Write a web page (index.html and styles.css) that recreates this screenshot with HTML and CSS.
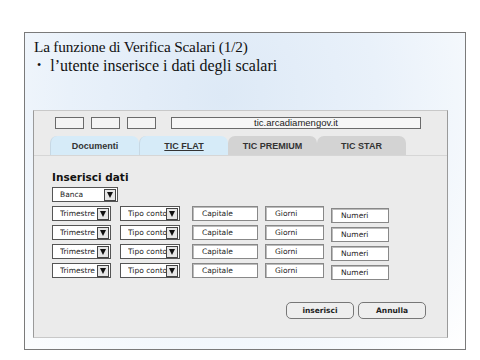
FILE: index.html
```html
<!DOCTYPE html>
<html lang="it">
<head>
  <meta charset="UTF-8">
  <title>La funzione di Verifica Scalari</title>
  <link rel="stylesheet" href="styles.css">
</head>
<body>
  <div class="slide">
    <h1 class="title">La funzione di Verifica Scalari (1/2)</h1>
    <ul class="bullets">
      <li>l’utente inserisce i dati degli scalari</li>
    </ul>

    <div class="mockup">
      <div class="browser-bar">
        <span class="nav-box"></span>
        <span class="nav-box"></span>
        <span class="nav-box"></span>
        <span class="url-box">tic.arcadiamengov.it</span>
      </div>

      <div class="tabs">
        <span class="tab active">Documenti</span>
        <span class="tab active link">TIC FLAT</span>
        <span class="tab">TIC PREMIUM</span>
        <span class="tab">TIC STAR</span>
      </div>

      <div class="content">
        <h2 class="form-title">Inserisci dati</h2>
        <div class="select wide"><span>Banca</span><i class="arrow"></i></div>

        <div class="rows" id="rows"></div>

        <div class="actions">
          <button class="btn">inserisci</button>
          <button class="btn">Annulla</button>
        </div>
      </div>
    </div>
  </div>

  <script>
    const rows = document.getElementById("rows");
    for (let i = 0; i < 4; i++) {
      const row = document.createElement("div");
      row.className = "row";
      row.innerHTML =
        '<div class="select trim"><span>Trimestre</span><i class="arrow"></i></div>' +
        '<div class="select tipo"><span>Tipo conto</span><i class="arrow"></i></div>' +
        '<div class="field cap">Capitale</div>' +
        '<div class="field gio">Giorni</div>' +
        '<div class="field num">Numeri</div>';
      rows.appendChild(row);
    }
  </script>
</body>
</html>
```

FILE: styles.css
```css
/* Pagina */
body {
  margin: 0;
  background: #ffffff;
  width: 480px;
  height: 360px;
  overflow: hidden;
}

.slide {
  box-sizing: border-box;
  margin: 32px 0 0 24px;
  width: 442px;
  height: 318px;
  border: 1px solid #7a7a7a;
  background: radial-gradient(ellipse at 45% 20%, #dde9f6 0%, #e9f1fa 45%, #f7fafd 80%, #ffffff 100%);
  padding: 4px 0 0 8px;
}

.title {
  margin: 0;
  padding-left: 1px;
  font-family: "Liberation Serif", serif;
  font-weight: normal;
  font-size: 15.3px;
  line-height: 19px;
  color: #111;
  letter-spacing: -0.2px;
}

.bullets {
  margin: 0;
  padding: 0;
  list-style: none;
  font-family: "Liberation Serif", serif;
  font-size: 16px;
  line-height: 19px;
  color: #111;
}

.bullets li {
  display: flex;
  gap: 9px;
}

.bullets li::before {
  content: "•";
  font-size: 12px;
  padding-left: 4px;
}

/* Mockup finestra */
.mockup {
  box-sizing: border-box;
  margin-top: 35px;
  width: 415px;
  height: 228px;
  background: #ebebeb;
  border: 1px solid #c8c8c8;
  border-left-color: #9a9a9a;
  border-right-color: #9a9a9a;
  font-family: "Liberation Sans", sans-serif;
}

.browser-bar {
  display: flex;
  gap: 7px;
  padding: 6px 0 0 21px;
  height: 13px;
}

.nav-box {
  box-sizing: border-box;
  width: 29px;
  height: 12px;
  border: 1px solid #6a6a6a;
  background: #f4f4f4;
}

.url-box {
  box-sizing: border-box;
  margin-left: 8px;
  width: 250px;
  height: 12px;
  border: 1px solid #6a6a6a;
  background: #f6f6f6;
  font-size: 9.5px;
  line-height: 10px;
  text-align: center;
  color: #222;
}

.tabs {
  display: flex;
  margin-top: 6px;
  padding-left: 16px;
  border-bottom: 1px solid #d6d6d6;
}

.tab {
  box-sizing: border-box;
  width: 89px;
  height: 19px;
  background: #d3d3d3;
  border-radius: 7px 7px 0 0;
  font-size: 9px;
  font-weight: bold;
  line-height: 20px;
  text-align: center;
  color: #333;
}

.tab.active {
  background: #d6ebf8;
  border-left: 1px solid #c7d8e4;
}

.tab.link {
  text-decoration: underline;
}

.content {
  padding: 15px 0 0 18px;
}

.form-title {
  margin: 0 0 3px 0;
  font-family: "DejaVu Sans", sans-serif;
  font-size: 10.5px;
  line-height: 13px;
  color: #111;
}

/* Campi */
.select,
.field {
  box-sizing: border-box;
  height: 15px;
  border: 1px solid #555;
  background: #fff;
  font-family: "DejaVu Sans", sans-serif;
  font-size: 7.5px;
  line-height: 13px;
  color: #222;
  white-space: nowrap;
  overflow: hidden;
}

.select {
  display: flex;
  align-items: center;
  justify-content: space-between;
  padding-left: 7px;
}

.select span {
  overflow: hidden;
}

.arrow {
  flex: none;
  box-sizing: border-box;
  width: 12px;
  height: 12px;
  margin-right: 1px;
  border: 1px solid #444;
  background: #e6e6e6;
  position: relative;
}

.arrow::after {
  content: "";
  position: absolute;
  left: 2px;
  top: 2px;
  border-left: 3px solid transparent;
  border-right: 3px solid transparent;
  border-top: 6px solid #111;
}

.select.wide {
  width: 66px;
}

.select.trim {
  width: 59px;
}

.select.tipo {
  width: 60px;
  margin-left: 9px;
}

.rows {
  display: flex;
  flex-direction: column;
  gap: 4px;
  margin-top: 4px;
}

.row {
  display: flex;
  align-items: flex-start;
  height: 15px;
}

.field {
  border-color: #888;
  box-shadow: inset 1px 1px 0 #bbb;
  padding-left: 9px;
}

.field.cap {
  margin-left: 12px;
  width: 66px;
}

.field.gio {
  margin-left: 7px;
  width: 59px;
}

.field.num {
  margin-left: 7px;
  margin-top: 2px;
  width: 58px;
}

.actions {
  display: flex;
  justify-content: flex-end;
  gap: 4px;
  margin-top: 24px;
  padding-right: 21px;
}

.btn {
  box-sizing: border-box;
  width: 68px;
  height: 17px;
  padding: 0;
  border: 1px solid #777;
  border-radius: 5px;
  background: #eeeeee;
  font-family: "DejaVu Sans", sans-serif;
  font-size: 7.5px;
  font-weight: bold;
  color: #222;
}
```
